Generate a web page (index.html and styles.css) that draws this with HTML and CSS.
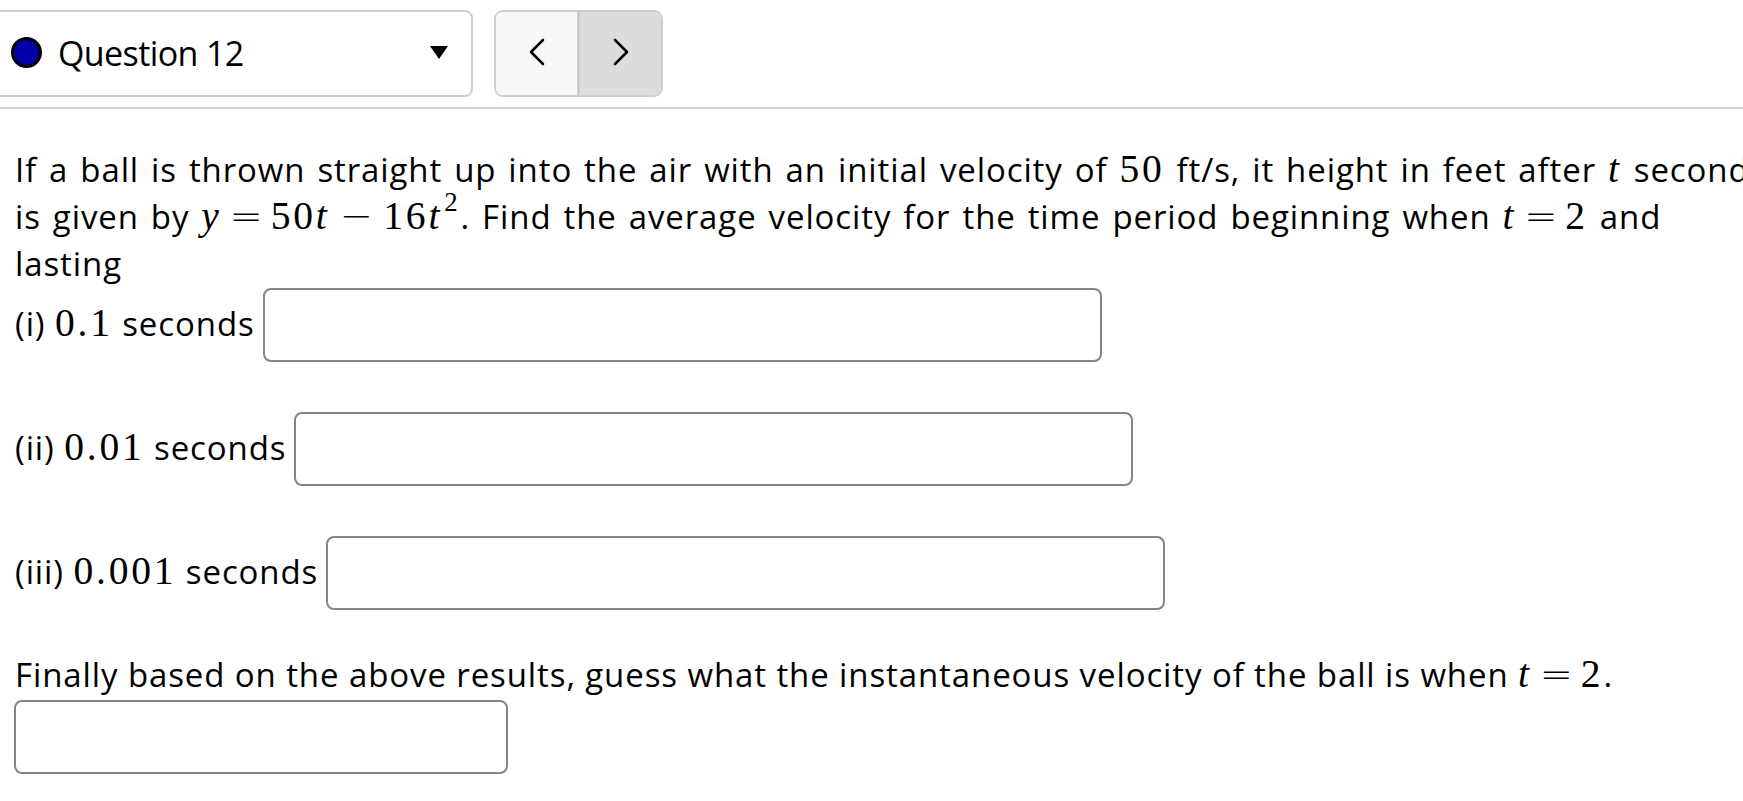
FILE: index.html
```html
<!DOCTYPE html>
<html lang="en">
<head>
<meta charset="utf-8">
<title>Question 12</title>
<link rel="stylesheet" href="styles.css">
</head>
<body>
<div class="page">
  <header class="topbar">
    <div class="qselect">
      <span class="dot"></span>
      <span class="qlabel">Question 12</span>
      <svg class="caret" width="18" height="13" viewBox="0 0 18 13"><polygon points="0,0 18,0 9,13" fill="#000"/></svg>
    </div>
    <div class="nav">
      <button class="navbtn prev" type="button" aria-label="Previous question">
        <svg width="18" height="28" viewBox="0 0 18 28"><polyline points="15,2 3,14 15,26" fill="none" stroke="#000" stroke-width="2.6" stroke-linecap="round" stroke-linejoin="round"/></svg>
      </button>
      <button class="navbtn next" type="button" aria-label="Next question">
        <svg width="18" height="28" viewBox="0 0 18 28"><polyline points="3,2 15,14 3,26" fill="none" stroke="#000" stroke-width="2.6" stroke-linecap="round" stroke-linejoin="round"/></svg>
      </button>
    </div>
  </header>
  <div class="rule"></div>
  <main class="question">
    <p class="stem">If a ball is thrown straight up into the air with an initial velocity of <span class="m">50</span> ft/s, it height in feet after <span class="m mi">t</span> seconds<br>is given by <span class="m mi">y</span><span class="m op rel">=</span><span class="m">50<span class="mi">t</span></span><span class="m op bin">−</span><span class="m">16<span class="mi">t</span><sup class="sup">2</sup></span>. Find the average velocity for the time period beginning when <span class="m mi">t</span><span class="m op rel">=</span><span class="m">2</span> and<br>lasting</p>
    <div class="part first">
      <span class="label">(i) <span class="m">0.1</span> seconds</span>
      <input class="answer wide" type="text">
    </div>
    <div class="part">
      <span class="label">(ii) <span class="m">0.01</span> seconds</span>
      <input class="answer wide" type="text">
    </div>
    <div class="part">
      <span class="label">(iii) <span class="m">0.001</span> seconds</span>
      <input class="answer wide" type="text">
    </div>
    <p class="final">Finally based on the above results, guess what the instantaneous velocity of the ball is when <span class="m mi">t</span><span class="m op rel">=</span><span class="m">2</span>.</p>
    <input class="answer short" type="text">
  </main>
</div>
</body>
</html>
```

FILE: styles.css
```css
html, body {
  margin: 0;
  padding: 0;
  background: #fff;
  overflow: hidden;
}

.page {
  width: 1743px;
  height: 801px;
  overflow: hidden;
  color: #000;
  font-family: "Open Sans", "Noto Sans", sans-serif;
}

.topbar {
  display: flex;
  align-items: flex-start;
  gap: 21px;
  padding-top: 10px;
  height: 87px;
}

.qselect {
  box-sizing: border-box;
  margin-left: -10px;
  width: 483px;
  height: 87px;
  border: 2px solid #cfcfcf;
  border-radius: 8px;
  display: flex;
  align-items: center;
  padding: 0 23px 2px 19px;
  background: #fff;
}

.dot {
  box-sizing: border-box;
  width: 31px;
  height: 31px;
  border-radius: 50%;
  background: #0000a6;
  border: 3px solid #000;
  flex: none;
}

.qlabel {
  margin-left: 16px;
  font-size: 34px;
  letter-spacing: -0.6px;
  flex: 1;
}

.caret {
  display: block;
  flex: none;
}

.nav {
  box-sizing: border-box;
  width: 169px;
  height: 87px;
  border: 2px solid #cfcfcf;
  border-radius: 9px;
  display: flex;
  overflow: hidden;
}

.navbtn {
  flex: 1;
  border: 0;
  margin: 0;
  padding: 0 0 4px 0;
  display: flex;
  align-items: center;
  justify-content: center;
  cursor: pointer;
}

.navbtn.prev {
  background: #f8f8f8;
  border-right: 3px solid #cdcdcd;
}

.navbtn.next {
  background: #dcdcdc;
}

.navbtn svg {
  display: block;
}

.rule {
  height: 2px;
  background: #cfcfcf;
  margin-top: 10px;
}

.question {
  padding: 37px 0 0 15px;
  font-size: 33px;
  line-height: 47px;
  letter-spacing: 0.9px;
}

.stem {
  margin: 0;
  white-space: nowrap;
  word-spacing: 2.5px;
}

.m {
  font-family: "Liberation Serif", "DejaVu Serif", serif;
  font-size: 1.2em;
  line-height: 0;
  letter-spacing: 0.07em;
  word-spacing: 0;
}

.mi {
  font-style: italic;
}

.m .mi {
  font-size: 1em;
}

.op {
  font-family: "DejaVu Sans", sans-serif;
  font-size: 1.2em;
  font-weight: 300;
  letter-spacing: 0;
}

.rel {
  margin: 0 0.2em;
}

.bin {
  margin: 0 0.26em;
}

.sup {
  font-size: 0.68em;
  line-height: 0;
  vertical-align: 0.66em;
  margin-left: 0.08em;
}

.part {
  display: flex;
  align-items: center;
  gap: 8px;
  height: 74px;
  margin-top: 50px;
}

.part.first {
  margin-top: 1px;
}

.label {
  white-space: nowrap;
  line-height: 47px;
  padding-bottom: 4px;
}

.answer {
  box-sizing: border-box;
  height: 74px;
  border: 2px solid #858585;
  border-radius: 8px;
  background: #fff;
  margin: 0;
  padding: 0 10px;
  font: inherit;
  outline: none;
}

.answer.wide {
  width: 839px;
}

.answer.short {
  display: block;
  width: 494px;
  margin-top: 2px;
  margin-left: -1px;
}

.final {
  margin: 41px 0 0 0;
  white-space: nowrap;
}
```
